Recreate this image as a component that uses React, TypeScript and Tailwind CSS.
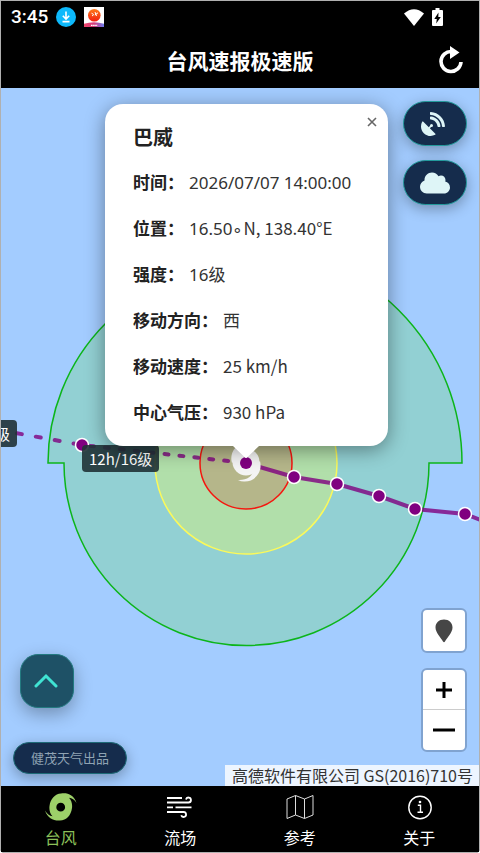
import type { ReactNode } from "react";
import { FaCloud, FaSatelliteDish } from "react-icons/fa";

// unit: trailing part of the value, set in the CJK face
const DETAILS = [
  { label: "时间", value: "2026/07/07 14:00:00", unit: "" },
  { label: "位置", value: "16.50∘", unit: "N, 138.40°E" },
  { label: "强度", value: "16", unit: "级" },
  { label: "移动方向", value: "", unit: "西" },
  { label: "移动速度", value: "", unit: "25 km/h" },
  { label: "中心气压", value: "", unit: "930 hPa" },
];

const TRACK = [
  [293, 389],
  [336, 396],
  [378, 408],
  [414, 421],
  [464, 426],
];

function StatusBar() {
  return (
    <div className="flex h-8 items-center justify-between pl-2.5 pr-9">
      <div className="flex items-center gap-2">
        <span className="font-['Roboto'] text-[19px] font-medium leading-6">3:45</span>
        <svg className="h-5 w-5" viewBox="0 0 20 20" fill="none">
          <circle cx="10" cy="10" r="10" fill="#0db9fb" />
          <path d="M10 4.500v7M6.800 8.800l3.200 3.200 3.200-3.200M6.500 14.600h7" stroke="#fff" strokeWidth="1.600" />
        </svg>
        <svg className="h-5 w-5" viewBox="0 0 20 20">
          <defs>
            <linearGradient id="band" x1="0" x2="1">
              <stop offset="0" stopColor="#f0456a" />
              <stop offset="0.5" stopColor="#d43c7d" />
              <stop offset="1" stopColor="#6a7cf0" />
            </linearGradient>
            <linearGradient id="ball" x1="0" y1="0" x2="0" y2="1">
              <stop offset="0" stopColor="#ff7a1a" />
              <stop offset="1" stopColor="#f01d12" />
            </linearGradient>
          </defs>
          <path d="M0 0h20v20H0z" fill="#fff" />
          <path d="M0 20v-3.200Q10 13.500 20 16.800V20z" fill="url(#band)" />
          <circle cx="10.300" cy="8.300" r="6.300" fill="url(#ball)" />
          <path d="M7.500 6.200l2 1.200M8 9l1.800-1.400M11 5l1.500 4M10.800 8l3.200-2.200" stroke="#fff" strokeWidth="1" />
          <path d="M7 18.300h6.500" stroke="#fff" strokeWidth="1.300" strokeDasharray="1.600 0.500" />
        </svg>
      </div>
      <div className="flex items-center gap-2">
        <svg className="h-[17px] w-5" viewBox="0 0 20 17" fill="#fff">
          <path d="M0 4.500Q10-4.200 20 4.500L10 17z" />
        </svg>
        <svg className="h-[18px] w-[11px]" viewBox="0 0 11 18">
          <path d="M3.500 0h4v2H10q1 0 1 1v14q0 1-1 1H1q-1 0-1-1V3q0-1 1-1h2.500z" fill="#fff" />
          <path d="M6.500 4.500L2.300 11h2.500l-.600 4.500L8.800 9H6.300z" fill="#000" />
        </svg>
      </div>
    </div>
  );
}

function Header() {
  return (
    <header className="bg-black text-white">
      <StatusBar />
      <div className="relative flex h-[55px] items-center justify-center pb-0.5">
        <h1 className="text-[21px] font-bold leading-7">台风速报极速版</h1>
        <button type="button" aria-label="刷新" className="absolute right-4 top-3">
          <svg className="h-[30px] w-6" viewBox="0 0 24 30" fill="none">
            <path d="M22 17A10 10 0 1 1 12.500 6.500" stroke="#fff" strokeWidth="3.600" />
            <path d="M11 1l9.500 6.500L11 14z" fill="#fff" />
          </svg>
        </button>
      </div>
    </header>
  );
}

// wind circles and track, centred on the storm at (245, 375)
function TyphoonMap() {
  return (
    <svg
      className="absolute inset-0 h-full w-full"
      viewBox="0 0 478 698"
      preserveAspectRatio="xMidYMid slice"
      fill="none"
    >
      <path
        d="M47 375A198 198 0 0 1 245 177V159A216 216 0 0 1 461 375H428A182.500 182.500 0 0 1 63 375z"
        fill="#92d0d3"
        stroke="#0cb51a"
        strokeWidth="1.500"
      />
      <circle cx="245" cy="375" r="91" fill="#b1dfaa" stroke="#fbf95a" strokeWidth="1.500" />
      <circle cx="245" cy="375" r="46" fill="#b5b68a" stroke="#f5160f" strokeWidth="1.500" />
      <g stroke="#800080" strokeOpacity="0.800" strokeWidth="4" strokeLinecap="round">
        <path d="M-2 342L81 357" strokeDasharray="5 14.200" strokeDashoffset="1" />
        <path d="M81 357L245 375" strokeDasharray="4 11" strokeDashoffset="7" />
        <path d="M245 375L293 389 336 396 378 408 414 421 464 426 482 433" />
      </g>
      <g fill="#f4f4f4">
        <circle cx="245" cy="374" r="13.500" />
        <path d="M259 373C262 385 253 394 243 393.500C241 393.500 239 393 237 392C246 392.500 253 388 252 380z" />
        <path d="M231 375C228 363 237 354 247 354.500C249 354.500 251 355 253 356C244 355.500 237 360 238 368z" />
      </g>
      <circle cx="245" cy="375" r="6" fill="#800080" />
      <circle cx="81" cy="357" r="6.500" fill="#800080" stroke="#fff" strokeWidth="1.500" />
      {TRACK.map(([x, y]) => (
        <circle key={x} cx={x} cy={y} r="6.500" fill="#800080" stroke="#fff" strokeWidth="1.500" />
      ))}
    </svg>
  );
}

function PointLabel({ className, children }: { className: string; children: ReactNode }) {
  return (
    <span
      className={`absolute whitespace-nowrap rounded bg-[#203236]/90 px-[7px] text-[15px] leading-[27px] text-white ${className}`}
    >
      {children}
    </span>
  );
}

function Popup() {
  return (
    <section className="absolute left-[104px] top-4 w-[283px] rounded-[18px] bg-white px-7 pb-[21px] pt-[19px] text-[#333] shadow-[0_4px_20px_rgba(0,0,0,0.4)]">
      <button
        type="button"
        aria-label="关闭"
        className="absolute right-2.5 top-3 flex h-3 w-3 items-center justify-center"
      >
        <svg className="h-2.5 w-2.5" viewBox="0 0 10 10" stroke="#666" strokeWidth="1.600">
          <path d="M1 1l8 8M9 1l-8 8" />
        </svg>
      </button>
      <h2 className="text-xl font-bold leading-7 text-[#222]">巴威</h2>
      <dl className="mt-[17px] space-y-[19px] text-[17px] leading-[27px]">
        {DETAILS.map((item) => (
          <div key={item.label} className="flex gap-[5px]">
            <dt className="font-bold text-[#222]">{item.label}：</dt>
            <dd className="whitespace-nowrap">
              {item.value && (
                <span className="font-['Noto_Sans',sans-serif] leading-5">{item.value}</span>
              )}
              {item.unit}
            </dd>
          </div>
        ))}
      </dl>
      <svg className="absolute left-[128px] top-full h-3 w-[26px]" viewBox="0 0 26 12" fill="#fff">
        <path d="M0 0h26L14 11.500q-1 1-2 0z" />
      </svg>
    </section>
  );
}

function LayerButton({ label, children }: { label: string; children: ReactNode }) {
  return (
    <button
      type="button"
      aria-label={label}
      className="flex h-[45px] w-16 items-center justify-center rounded-full border border-[#239a9c] bg-[#152c4c] text-[#def5f7] shadow-[0_4px_14px_rgba(0,0,0,0.3)]"
    >
      {children}
    </button>
  );
}

function MapControls() {
  return (
    <div className="absolute bottom-[34px] right-3 flex flex-col gap-[15px]">
      <button
        type="button"
        aria-label="定位"
        className="flex h-[45px] w-[46px] items-center justify-center rounded-md border-2 border-[#80a3d0] bg-white"
      >
        <svg className="h-6 w-[18px]" viewBox="0 0 18 24" fill="#464646">
          <path d="M9 0.500C4 .500.500 4 .500 8.500C.500 13.500 6 19 8 22.500Q9 24 10 22.500C12 19 17.500 13.500 17.500 8.500C17.500 4 14 .500 9 .500z" />
        </svg>
      </button>
      <div className="w-[46px] divide-y divide-[#ccc] overflow-hidden rounded-md border-2 border-[#80a3d0] bg-white">
        <button type="button" aria-label="放大" className="flex h-10 w-full items-center justify-center">
          <svg className="h-4 w-4" viewBox="0 0 16 16" stroke="#000" strokeWidth="3">
            <path d="M8 0v16M0 8h16" />
          </svg>
        </button>
        <button type="button" aria-label="缩小" className="flex h-10 w-full items-center justify-center">
          <svg className="h-4 w-[22px]" viewBox="0 0 22 16" stroke="#000" strokeWidth="3">
            <path d="M0 8h22" />
          </svg>
        </button>
      </div>
    </div>
  );
}

function TyphoonIcon() {
  return (
    <svg className="h-7 w-8" viewBox="0 0 32 28" fill="#9dd069">
      <path
        fillRule="evenodd"
        d="M16 0.500C22 -0.500 29 1.500 31.500 10C29.500 6.800 27 5.200 24 4.800C26.500 7.500 27.500 11 27 15C26 22.500 21.500 27.300 15 27.500C8.500 28 2.500 25 0 17.500C2 21 4.500 22.800 7.500 23.200C5 20.500 4 17 4.500 13C5.500 5.500 10 1 16 .500zM15.700 9.800a4.400 4.400 0 1 0 0 8.800a4.400 4.400 0 0 0 0-8.800z"
      />
    </svg>
  );
}

function WindIcon() {
  return (
    <svg className="h-7 w-7" viewBox="0 0 28 28" fill="none" stroke="#fff" strokeWidth="1.800">
      <path d="M1 5h15M1 9.500h21.500a2.500 2.500 0 1 0-2.500-3" />
      <path d="M1 14.300h6M9.500 14.300h16M1 19h16.500a2.500 2.500 0 1 1-2.300 3.300" />
    </svg>
  );
}

function MapIcon() {
  return (
    <svg className="h-7 w-7" viewBox="0 0 28 28" fill="none" stroke="#ddd" strokeWidth="1">
      <path d="M1 6l8.500-3.500L18.500 6l8.500-3.500V22l-8.500 3.500-9-3.500L1 25.500zM9.500 2.500V22M18.500 6v19.500" />
    </svg>
  );
}

function InfoIcon() {
  return (
    <svg className="h-7 w-7" viewBox="0 0 28 28" fill="none" stroke="#fff" strokeWidth="1.400">
      <circle cx="15" cy="14.500" r="11.200" />
      <path d="M12.800 12.200h2.700v7M12.500 19.300h5.500" />
      <circle cx="15" cy="9" r="1.300" fill="#fff" stroke="none" />
    </svg>
  );
}

const TABS = [
  { name: "台风", icon: <TyphoonIcon />, active: true },
  { name: "流场", icon: <WindIcon />, active: false },
  { name: "参考", icon: <MapIcon />, active: false },
  { name: "关于", icon: <InfoIcon />, active: false },
];

function TabBar() {
  return (
    <nav className="grid h-[66px] grid-cols-4 bg-black">
      {TABS.map((tab) => (
        <a
          key={tab.name}
          href="#"
          className={`flex flex-col items-center gap-1 pt-[7px] text-base leading-6 ${
            tab.active ? "text-[#8cc05a]" : "text-white"
          }`}
        >
          {tab.icon}
          <span>{tab.name}</span>
        </a>
      ))}
    </nav>
  );
}

export default function App() {
  return (
    <div className="flex min-h-screen flex-col rounded-b border border-[#b0b0b0] bg-black font-['Noto_Sans_CJK_SC',sans-serif]">
      <Header />
      <main className="relative min-h-[560px] flex-1 overflow-hidden bg-[#a3ccff]">
        <TyphoonMap />
        <PointLabel className="-left-[13px] top-[332px]">级</PointLabel>
        <PointLabel className="left-[81px] top-[357px]">12h/16级</PointLabel>
        <Popup />

        <div className="absolute right-3 top-[13px] flex flex-col gap-3.5">
          <LayerButton label="卫星">
            <FaSatelliteDish className="mr-1 h-6 w-6" />
          </LayerButton>
          <LayerButton label="云图">
            <FaCloud className="h-6 w-[30px]" />
          </LayerButton>
        </div>

        <MapControls />

        <div className="absolute bottom-3 left-3 flex flex-col items-start gap-[34px]">
          <button
            type="button"
            aria-label="展开"
            className="ml-[7px] flex h-[54px] w-[54px] items-center justify-center rounded-[18px] border border-[#237a80] bg-[#1e5166] pr-0.5 shadow-[0_6px_18px_rgba(0,0,0,0.3)]"
          >
            <svg className="h-4 w-6" viewBox="0 0 24 16" fill="none" stroke="#40e3d3" strokeWidth="3" strokeLinecap="round">
              <path d="M2 13L12 3l10 10" />
            </svg>
          </button>
          <span className="rounded-full border border-[#1d6a76] bg-[#152c4c] px-[17px] text-[13px] leading-[30px] text-[#8fa3b3] shadow-[0_4px_14px_rgba(0,0,0,0.3)]">
            健茂天气出品
          </span>
        </div>

        <small className="absolute bottom-0 right-0 bg-white/80 pl-[7px] pr-1.5 text-base leading-[21px] text-[#333]">
          高德软件有限公司 GS(2016)710号
        </small>
      </main>
      <TabBar />
    </div>
  );
}
